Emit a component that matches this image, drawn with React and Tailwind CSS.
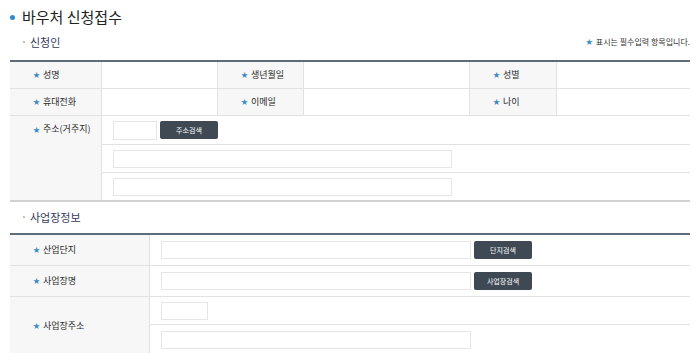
const FONT = { fontFamily: '"Noto Sans CJK KR", "Noto Sans", sans-serif' };

function Star() {
  return <span className="text-[#3a8cc4] text-[7px] mr-[3px] relative top-[-0.5px]">★</span>;
}

function Label({ children, className = "" }) {
  return (
    <div className={`bg-[#f7f7f7] border-x border-[#e2e2e2] flex items-center pl-[23px] text-[9px] text-[#2a2a2a] ${className}`}>
      <Star />
      {children}
    </div>
  );
}

function Input({ className = "" }) {
  return <div className={`border border-[#e6e6e6] bg-white h-[18px] ${className}`} />;
}

function Btn({ children }) {
  return (
    <div className="ml-[3px] w-[58px] h-[18px] bg-[#3e4954] rounded-[2px] flex items-center justify-center text-[7px] text-white">
      {children}
    </div>
  );
}

function SectionTitle({ children, right }) {
  return (
    <div className="flex items-center justify-between h-[20px] pl-[13px]">
      <div className="flex items-center text-[11px] text-[#363a5c]">
        <span className="w-[2px] h-[2px] bg-[#aaa] rounded-full mr-[5px]" />
        {children}
      </div>
      {right}
    </div>
  );
}

export default function App() {
  return (
    <div className="w-[700px] h-[353px] overflow-hidden bg-white px-[10px] pt-[7px]" style={FONT}>
      <div className="flex items-center h-[20px]">
        <span className="w-[5px] h-[5px] rounded-full bg-[#2a8dcc] mr-[7px]" />
        <span className="text-[15px] text-[#222]">바우처 신청접수</span>
      </div>

      <div className="mt-[5px]">
        <SectionTitle
          right={
            <div className="text-[8px] text-[#333] flex items-center">
              <Star />표시는 필수입력 항목입니다.
            </div>
          }
        >
          신청인
        </SectionTitle>
      </div>

      {/* 신청인 table */}
      <div className="mt-[8px] border-t-2 border-[#5d6c78] border-b-2 border-b-[#d2d2d2]">
        {[
          ["성명", "생년월일", "성별"],
          ["휴대전화", "이메일", "나이"],
        ].map((row, i) => (
          <div key={i} className="flex h-[27px] border-b border-[#e2e2e2]">
            <Label className="w-[92px] border-l-0">{row[0]}</Label>
            <div className="w-[115px]" />
            <Label className="w-[87px]">{row[1]}</Label>
            <div className="w-[165px]" />
            <Label className="w-[88px]">{row[2]}</Label>
            <div className="flex-1" />
          </div>
        ))}
        <div className="flex">
          <div className="w-[92px] bg-[#f7f7f7] border-r border-[#e2e2e2] pl-[23px] pt-[6px] text-[9px] text-[#2a2a2a]">
            <Star />주소(거주지)
          </div>
          <div className="flex-1">
            <div className="h-[29px] border-b border-[#e2e2e2] flex items-center pl-[11px]">
              <Input className="w-[44px] h-[19px]" />
              <Btn>주소검색</Btn>
            </div>
            <div className="h-[28px] border-b border-[#e2e2e2] flex items-center pl-[11px]">
              <Input className="w-[339px]" />
            </div>
            <div className="h-[27px] flex items-center pl-[11px]">
              <Input className="w-[339px]" />
            </div>
          </div>
        </div>
      </div>

      <div className="mt-[5px]">
        <SectionTitle>사업장정보</SectionTitle>
      </div>

      {/* 사업장정보 table */}
      <div className="mt-[6px] border-t-2 border-[#5d6c78]">
        <div className="flex h-[31px] border-b border-[#e2e2e2]">
          <Label className="w-[140px] border-l-0">산업단지</Label>
          <div className="flex-1 flex items-center pl-[11px]">
            <Input className="w-[310px]" />
            <Btn>단지검색</Btn>
          </div>
        </div>
        <div className="flex h-[31px] border-b border-[#e2e2e2]">
          <Label className="w-[140px] border-l-0">사업장명</Label>
          <div className="flex-1 flex items-center pl-[11px]">
            <Input className="w-[310px]" />
            <Btn>사업장검색</Btn>
          </div>
        </div>
        <div className="flex">
          <Label className="w-[140px] border-l-0">사업장주소</Label>
          <div className="flex-1">
            <div className="h-[28px] border-b border-[#e2e2e2] flex items-center pl-[11px]">
              <Input className="w-[47px]" />
            </div>
            <div className="h-[30px] flex items-center pl-[11px]">
              <Input className="w-[310px]" />
            </div>
          </div>
        </div>
      </div>
    </div>
  );
}
